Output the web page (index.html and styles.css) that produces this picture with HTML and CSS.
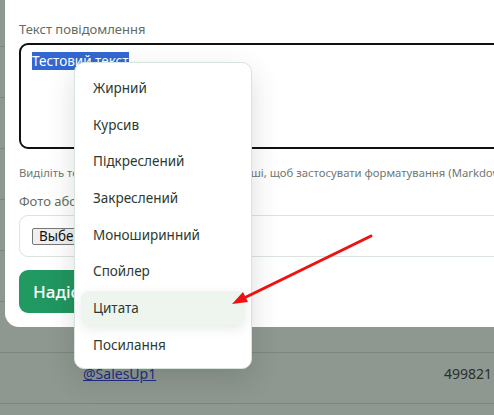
FILE: index.html
```html
<!DOCTYPE html>
<html lang="uk">
<head>
    <meta charset="UTF-8">
    <meta name="viewport" content="width=device-width, initial-scale=1.0">
    <title>Розсилка</title>
    <link rel="stylesheet" href="styles.css">
</head>
<body>
    <!-- table behind the dimmed overlay -->
    <div class="table">
        <div class="row"></div>
        <div class="row"></div>
        <div class="row"></div>
        <div class="row"></div>
        <div class="row"></div>
        <div class="row"></div>
        <div class="row"></div>
        <div class="row">
            <a href="#" class="user-link">@SalesUp1</a>
            <span class="user-id">499821</span>
        </div>
    </div>

    <div class="modal">
        <div class="field-label">Текст повідомлення</div>
        <div class="textarea"><span class="selected">Тестовий текст</span></div>
        <div class="hint">Виділіть текст і натисніть праву кнопку миші, щоб застосувати форматування (Markdown)</div>
        <div class="field-label">Фото або відео</div>
        <div class="file-box">
            <span class="file-btn">Выберите файл</span>
        </div>
        <button class="send-btn">Надіслати</button>
    </div>

    <div class="context-menu">
        <div class="menu-item">Жирний</div>
        <div class="menu-item">Курсив</div>
        <div class="menu-item">Підкреслений</div>
        <div class="menu-item">Закреслений</div>
        <div class="menu-item">Моноширинний</div>
        <div class="menu-item">Спойлер</div>
        <div class="menu-item hover">Цитата</div>
        <div class="menu-item">Посилання</div>
    </div>

    <svg class="arrow" width="494" height="415" viewBox="0 0 494 415">
        <line x1="371" y1="236" x2="242" y2="299" stroke="#f01010" stroke-width="3" stroke-linecap="round"/>
        <polygon points="232,304 243,292 248,302" fill="#f01010"/>
    </svg>
</body>
</html>
```

FILE: styles.css
```css
body {
    margin: 0;
    width: 494px;
    height: 415px;
    overflow: hidden;
    position: relative;
    font-family: "Noto Sans", "Open Sans", sans-serif;
    background: #8e9790;
}
.table {
    margin-top: -4px;
}
.row {
    height: 50px;
    border-bottom: 1px solid #7c867e;
    display: flex;
    align-items: flex-start;
    font-size: 14px;
}
.user-link {
    margin: 11px 0 0 83px;
    color: #1e2a86;
    text-decoration: underline;
}
.user-id {
    margin: 11px 2px 0 auto;
    color: #2a302c;
}
.modal {
    position: absolute;
    left: 5px;
    top: -30px;
    width: 540px;
    background: #fff;
    border-radius: 14px;
    padding: 50px 0 14px 14px;
    box-sizing: border-box;
}
.field-label {
    font-size: 13px;
    line-height: 18px;
    color: #5f6d65;
    margin-bottom: 5px;
}
.textarea {
    height: 106px;
    border: 2px solid #111;
    border-radius: 9px;
    box-sizing: border-box;
    padding: 9px 11px;
    font-size: 13.5px;
    line-height: 14px;
}
.selected {
    background: #3367d1;
    color: #fff;
}
.hint {
    font-size: 11.3px;
    color: #6f7873;
    margin: 16px 0 12px;
    white-space: nowrap;
}
.file-box {
    height: 42px;
    border: 1px solid #dbe4de;
    border-radius: 9px;
    box-sizing: border-box;
    display: flex;
    align-items: center;
    padding-left: 12px;
    font-size: 13.5px;
}
.file-btn {
    background: #efefef;
    border: 1px solid #767676;
    border-radius: 2px;
    padding: 0 6px;
    line-height: 15px;
    color: #111;
}
.send-btn {
    display: block;
    margin-top: 13px;
    height: 43px;
    width: 160px;
    border: none;
    border-radius: 9px;
    background: linear-gradient(90deg, #219a62, #1f8a5a);
    color: #fff;
    font-family: inherit;
    font-size: 17px;
    font-weight: 500;
    text-align: left;
    padding-left: 14px;
}
.context-menu {
    position: absolute;
    left: 74px;
    top: 62px;
    width: 178px;
    height: 307px;
    box-sizing: border-box;
    background: #fff;
    border: 1px solid #d6e6dc;
    border-radius: 10px;
    padding: 8px 6px 6px;
    display: flex;
    flex-direction: column;
    gap: 2.7px;
    box-shadow: 0 10px 28px rgba(30, 50, 40, 0.16);
}
.menu-item {
    height: 34px;
    flex-shrink: 0;
    display: flex;
    align-items: center;
    padding-left: 12px;
    font-size: 13.5px;
    color: #2c3a32;
    border-radius: 8px;
}
.menu-item.hover {
    background: #eef5ef;
    box-shadow: 0 4px 12px rgba(30, 60, 40, 0.1);
}
.arrow {
    position: absolute;
    left: 0;
    top: 0;
}
```
